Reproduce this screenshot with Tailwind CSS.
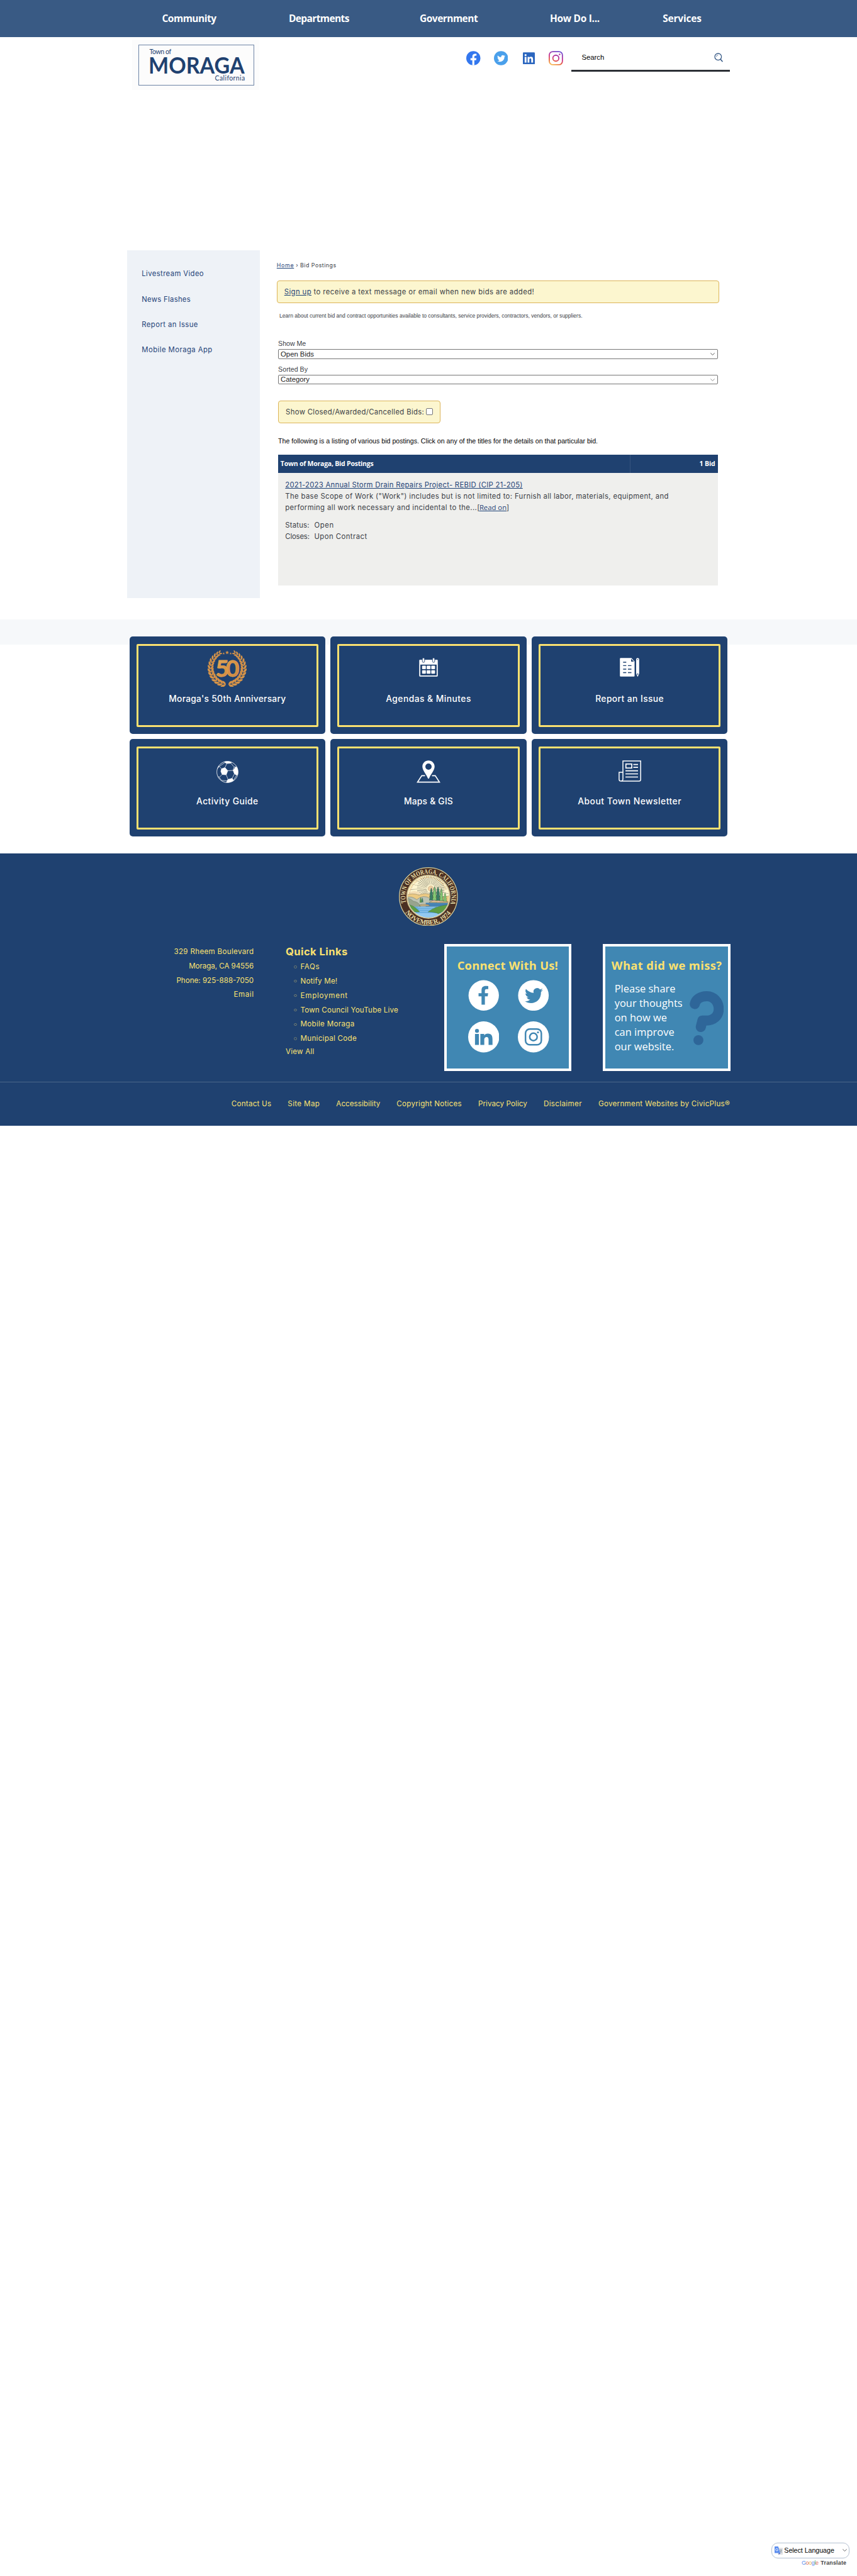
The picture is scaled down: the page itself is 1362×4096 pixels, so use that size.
<!DOCTYPE html>
<html lang="en">
<head>
<meta charset="utf-8">
<title>Bid Postings - Town of Moraga</title>
<script src="https://cdn.jsdelivr.net/npm/@tailwindcss/browser@4"></script>
</head>
<body class="flex h-[4096px] flex-col overflow-hidden bg-white font-['Inter',sans-serif] text-[11.3px] text-[#3b4046]">

<!-- Main navigation -->
<nav class="h-[58.5px] shrink-0 bg-[#395a84] pt-[19px] font-['Open_Sans',sans-serif] text-[15.5px] font-bold leading-5 text-white">
  <div class="flex whitespace-nowrap pl-[257.5px]">
    <a class="w-[201.4px] tracking-[-0.51px]">Community</a>
    <a class="w-[208.2px] tracking-[-0.6px]">Departments</a>
    <a class="w-[206.9px] tracking-[-0.53px]">Government</a>
    <a class="w-[179.2px] tracking-[-0.3px]">How Do I...</a>
    <a class="tracking-[-0.2px]">Services</a>
  </div>
</nav>

<!-- Header -->
<header class="mx-auto flex h-[339.4px] w-[958px] shrink-0 items-start justify-between pl-2 pt-[4.5px] font-['Liberation_Sans',sans-serif]">
  <a class="flex h-[80px] w-[202px] bg-[#fcfcfc] pl-[9.6px] pt-2">
    <span class="block h-[65px] w-[184.5px] border border-[#6d84a5] px-[17px] font-['Lato',sans-serif] text-[#1f4170]">
      <span class="block text-[10.5px] leading-5 tracking-[-0.44px]">Town of</span>
      <span class="-ml-[2px] block w-[168px] origin-left scale-x-92 text-[37px] font-bold leading-[21px]">MORAGA</span>
      <span class="block pl-[104px] text-[10.5px] leading-[23px] tracking-[0.39px]">California</span>
    </span>
  </a>
  <div class="flex items-start">
    <div class="flex items-center gap-[21.4px] pt-[18px]">
      <svg class="h-[23px] w-[22.5px]" viewBox="0 0 24 24"><circle cx="12" cy="12" r="12" fill="#3377ee"/><path fill="#fff" d="M10.3 24v-8.6H7.2V12h3.1V9.6c0-3.4 1.6-5 4.9-5 .7 0 1.7.1 2.2.2v2.9h-1.3c-1.8 0-2.4.7-2.4 2.4V12h3.6l-.6 3.4h-3V24z"/></svg>
      <svg class="h-[23px] w-[22.5px]" viewBox="0 0 24 24"><circle cx="12" cy="12" r="12" fill="#4aa0eb"/><path fill="#fff" d="M19.2 8.2c-.5.2-1 .4-1.600.5.6-.4 1-.9 1.200-1.600-.5.3-1.100.6-1.800.7A2.800 2.800 0 0 0 12.200 10.300C9.900 10.200 7.800 9.100 6.400 7.400c-.8 1.300-.4 3 .9 3.800-.5 0-.9-.1-1.300-.3 0 1.400 1 2.500 2.300 2.800-.4.1-.8.1-1.300 0 .4 1.200 1.400 2 2.600 2A5.700 5.700 0 0 1 5.500 16.800c4.700 2.900 12.400.7 12.300-7.200.6-.4 1-.9 1.400-1.400z"/></svg>
      <svg class="mx-[2px] h-[19.500px] w-[19px]" viewBox="0 0 20 20"><rect width="20" height="20" rx="1.300" fill="#2b66bf"/><g fill="#fff"><circle cx="4.500" cy="4.600" r="1.700"/><path d="M3 7.600h3V17H3zM7.900 7.600h2.800v1.300c.5-.9 1.500-1.500 2.900-1.500 2.700 0 3.400 1.700 3.400 4.300V17h-3v-4.700c0-1.300-.2-2.300-1.500-2.300s-1.700 1-1.700 2.200V17H7.900z"/></g></svg>
      <svg class="-ml-[1.500px] h-[23px] w-[22.800px]" viewBox="0 0 24 24" fill="none" stroke="url(#insta)"><defs><linearGradient id="insta" gradientUnits="userSpaceOnUse" x1="6" y1="24" x2="15" y2="0"><stop offset="0" stop-color="#f9c65a"/><stop offset=".28" stop-color="#e8603c"/><stop offset=".55" stop-color="#c8308f"/><stop offset="1" stop-color="#6b4bd0"/></linearGradient></defs><rect x="1" y="1" width="22" height="22" rx="6" stroke-width="1.900"/><circle cx="12" cy="12" r="5" stroke-width="1.900"/><circle cx="18.300" cy="5.700" r=".7" stroke="#b23aa4" stroke-width="1.300"/></svg>
    </div>
    <div class="ml-[13.500px] flex h-[51px] w-[252px] items-start justify-between border-b-[3px] border-[#2c3036] pl-[16.500px] pr-[11px] text-black">
      <span class="pt-[18px] text-[11.300px] leading-5">Search</span>
      <svg class="mt-[21px] h-[14.500px] w-[14px]" viewBox="0 0 14 14.500" fill="none" stroke="#3a5c88" stroke-linecap="round"><circle cx="6.300" cy="6.300" r="5.300" stroke-width="1.300"/><path d="M10.300 10.500 12.900 13.500" stroke-width="1.700"/><path d="M3.400 6A3.200 3.200 0 0 1 6 3.300" stroke-width=".8"/></svg>
    </div>
  </div>
</header>

<!-- Side navigation and bid listing -->
<div class="mx-auto flex h-[553.200px] w-[958px] shrink-0">
  <aside class="flex w-[210.600px] shrink-0 flex-col bg-[#eef2f7] pl-[23.300px] pt-[27px] leading-[20px] text-[#1f4377]">
    <a class="h-[40.300px] pt-[0.500px] tracking-[0.390px]">Livestream Video</a>
    <a class="h-[40.300px] pt-[0.500px] tracking-[0.290px]">News Flashes</a>
    <a class="h-[40.300px] pt-[0.500px] tracking-[0.430px]">Report an Issue</a>
    <a class="h-[40.300px] pt-[0.500px] tracking-[0.450px]">Mobile Moraga App</a>
  </aside>

  <main class="ml-[27.200px] w-[703.300px] shrink-0 whitespace-nowrap pt-[17px]">
    <p class="text-[8.800px] leading-[14px] tracking-[0.500px]"><a class="tracking-[0.700px] text-[#1f4377] underline">Home</a> › Bid Postings</p>
    <div class="mt-[17px] flex h-[36.200px] items-center rounded-[4px] border border-[#dcb458] bg-[#fcf6cf] px-[11px] tracking-[0.410px]"><p><a class="text-[#1f4377] underline">Sign up</a> to receive a text message or email when new bids are added!</p></div>

    <div class="pl-[2.300px] font-['Liberation_Sans',sans-serif]">
      <p class="mt-[14.200px] pl-[2px] text-[8.600px] leading-[12px] tracking-[-0.033px]">Learn about current bid and contract opportunities available to consultants, service providers, contractors, vendors, or suppliers.</p>
      <p class="mt-[31.900px] text-[10.600px] leading-[12px]">Show Me</p>
      <div class="mt-[3.300px] flex h-[15.600px] w-[698.500px] items-center justify-between rounded-[2px] border border-[#767676] bg-white pl-[3px] pr-[4px] text-[11.300px] leading-[13px] text-[#222]"><span>Open Bids</span>
        <svg class="h-[4px] w-[7px]" viewBox="0 0 7 4" fill="none" stroke="#333" stroke-width=".8"><path d="M.3.4 3.500 3.500 6.700.4"/></svg></div>
      <p class="mt-[9.900px] text-[10.600px] leading-[12px] tracking-[0.050px]">Sorted By</p>
      <div class="mt-[2.900px] flex h-[15.600px] w-[698.500px] items-center justify-between rounded-[2px] border border-[#767676] bg-white pl-[3px] pr-[4px] text-[11.300px] leading-[13px] text-[#222]"><span>Category</span>
        <svg class="h-[4px] w-[7px]" viewBox="0 0 7 4" fill="none" stroke="#777" stroke-width=".8"><path d="M.3.4 3.500 3.500 6.700.4"/></svg></div>
      <div class="mt-[25.900px] flex h-[35.900px] w-[257.700px] items-center gap-[3px] rounded-[4px] border border-[#dcb458] bg-[#fcf6cf] pl-[11px] font-['Inter',sans-serif] tracking-[0.350px]"><span>Show Closed/Awarded/Cancelled Bids:</span><i class="mb-[2px] block size-[10.500px] rounded-[2px] border border-[#767676] bg-white"></i></div>
      <p class="mt-[22px] text-[10.600px] leading-[12px] tracking-[0.013px] text-black">The following is a listing of various bid postings. Click on any of the titles for the details on that particular bid.</p>
    </div>

    <section class="ml-[2px] mt-[16.100px] w-[698.800px]">
      <header class="flex h-[28.700px] items-center bg-[#1f4170] font-['Open_Sans',sans-serif] text-[10.500px] font-bold text-white">
        <h2 class="flex-1 pl-[4px] tracking-[-0.220px]">Town of Moraga, Bid Postings</h2>
        <span class="flex h-full w-[139.700px] items-center justify-end border-l border-[#35547f] pr-[4px] tracking-[-0.130px]">1 Bid</span>
      </header>
      <div class="h-[178.800px] bg-[#efefed] pl-[11.500px] pt-[11.400px] leading-[17.300px]">
        <a class="block tracking-[0.278px] text-[#1f4377] underline">2021-2023 Annual Storm Drain Repairs Project- REBID (CIP 21-205)</a>
        <p class="tracking-[0.371px]">The base Scope of Work ("Work") includes but is not limited to: Furnish all labor, materials, equipment, and</p>
        <p class="tracking-[0.394px]">performing all work necessary and incidental to the...<span class="tracking-[-0.500px]">[</span><a class="font-['Open_Sans',sans-serif] font-medium tracking-normal text-[#1f4377] underline">Read on</a>]</p>
        <dl class="mt-[11.200px] grid grid-cols-[46.100px_auto]">
          <dt class="tracking-[0.220px]">Status:</dt><dd class="tracking-[0.700px]">Open</dd>
          <dt class="tracking-[-0.150px]">Closes:</dt><dd class="tracking-[0.470px]">Upon Contract</dd>
        </dl>
      </div>
    </section>
  </main>
</div>

<!-- Quick access cards -->
<section class="mt-[34.400px] shrink-0 bg-[linear-gradient(#f6f8fa_40px,#fff_40px)] pt-[27px]">
  <div class="mx-auto grid w-[951px] grid-cols-3 gap-[8px] text-center text-[13.800px] font-medium leading-[19px] text-white">
    <a class="block h-[154.800px] rounded-[5px] bg-[#1f4170] p-[11.300px]">
      <div class="h-full rounded-[2px] border-[3px] border-[#fbe170]">
        <div class="flex h-[75px] items-center justify-center pb-[2px]">
          <svg class="h-[58px] w-[62px]" viewBox="-31 -29 62 58">
            <defs>
              <linearGradient id="gold" gradientUnits="userSpaceOnUse" x1="-28" y1="-28" x2="22" y2="28"><stop offset="0" stop-color="#e9bd72"/><stop offset=".5" stop-color="#d79347"/><stop offset="1" stop-color="#c77f42"/></linearGradient>
              <g id="leaves"><path d="M0 3C-4.800 2-5.200-2-4.700-4.700-1.800-3.600 0-1.200 0 3zM0 3C0-.800 1.400-3.400 4.700-4.200 5.200-.800 3.800 2 0 3z"/></g>
              <g id="branch" fill="url(#gold)">
                <use href="#leaves" transform="translate(-5 25) rotate(-78)"/>
                <use href="#leaves" transform="translate(-10 23.300) rotate(-67)"/>
                <use href="#leaves" transform="translate(-14.500 20.800) rotate(-55)"/>
                <use href="#leaves" transform="translate(-18.500 17.500) rotate(-44)"/>
                <use href="#leaves" transform="translate(-21.800 13.200) rotate(-32)"/>
                <use href="#leaves" transform="translate(-24.300 8.500) rotate(-20)"/>
                <use href="#leaves" transform="translate(-25.800 3.500) rotate(-9)"/>
                <use href="#leaves" transform="translate(-26.200 -1.500) rotate(2) scale(.95)"/>
                <use href="#leaves" transform="translate(-25.500 -6.500) rotate(12) scale(.92)"/>
                <use href="#leaves" transform="translate(-24 -11.300) rotate(21) scale(.9)"/>
                <use href="#leaves" transform="translate(-21.500 -15.800) rotate(31) scale(.85)"/>
                <use href="#leaves" transform="translate(-18.500 -19.500) rotate(41) scale(.8)"/>
                <use href="#leaves" transform="translate(-15 -22.500) rotate(50) scale(.75)"/>
                <use href="#leaves" transform="translate(-11.500 -25) rotate(58) scale(.65)"/>
              </g>
              <path id="star" d="M0-3 .900-.900 3-.800 1.300.600 1.900 2.800 0 1.500-1.900 2.800-1.300.600-3-.800-.900-.900z"/>
            </defs>
            <use href="#branch"/><use href="#branch" transform="scale(-1 1)"/>
            <g fill="#d79347"><use href="#star" y="-25.500"/><use href="#star" transform="translate(-5.500 -24) scale(.6)"/><use href="#star" transform="translate(5.500 -24) scale(.6)"/></g>
            <text x="-2" y="13.200" text-anchor="middle" class="font-['Lato',sans-serif] text-[37px] font-bold tracking-[-5px]" fill="url(#gold)" stroke="#e0a04e" stroke-width=".8">50</text>
          </svg>
        </div>
        <p class="tracking-[0.260px]">Moraga's 50th Anniversary</p>
      </div>
    </a>
    <a class="block h-[154.800px] rounded-[5px] bg-[#1f4170] p-[11.300px]">
      <div class="h-full rounded-[2px] border-[3px] border-[#fbe170]">
        <div class="flex h-[75px] items-center justify-center pb-[6px]">
          <svg class="h-[30px] w-[30px]" viewBox="0 0 30 30" fill="#fff"><path d="M1.500 3h27q1.200 0 1.200 1.200v24.300q0 1.200-1.200 1.200h-27Q.300 29.700.300 28.500V4.200Q.300 3 1.500 3zM2 10.800V27.900h26V10.800z" fill-rule="evenodd"/><g stroke="#1f4170" stroke-width=".9"><rect x="5.200" y="0" width="3.600" height="7.200" rx="1.800"/><rect x="21.300" y="0" width="3.600" height="7.200" rx="1.800"/></g><rect x="4.800" y="12.500" width="6" height="5.600" rx="1"/><rect x="12.100" y="12.500" width="6" height="5.600" rx="1"/><rect x="19.400" y="12.500" width="6" height="5.600" rx="1"/><rect x="4.800" y="19.700" width="6" height="5.600" rx="1"/><rect x="12.100" y="19.700" width="6" height="5.600" rx="1"/><rect x="19.400" y="19.700" width="6" height="5.600" rx="1"/></svg>
        </div>
        <p class="tracking-[0.480px]">Agendas &amp; Minutes</p>
      </div>
    </a>
    <a class="block h-[154.800px] rounded-[5px] bg-[#1f4170] p-[11.300px]">
      <div class="h-full rounded-[2px] border-[3px] border-[#fbe170]">
        <div class="flex h-[75px] items-center justify-center pb-[6px]">
          <svg class="h-[30px] w-[31px]" viewBox="0 0 31 30"><path fill="#fff" d="M1.500.200h17l5 5.500v23q0 1.100-1.200 1.100H1.500Q.200 29.800.200 28.500v-27Q.200.200 1.500.200z"/><path fill="#1f4170" d="M18 1.500V6h4.500z"/><path stroke="#1f4170" stroke-width="1.300" d="M5.300 7h5M5.300 12.400h5M13 12.400h5.500M5.300 18h5M13 18h5.500M5.300 23.500h5M13 23.500h5.500"/><path fill="#fff" d="M26 2.800q0-2.600 2.400-2.600t2.400 2.600V25l-2.200 5h-.4L26 25z"/><circle cx="28.400" cy="2.700" r=".8" fill="#1f4170"/><path d="M28.400 24.800v2" stroke="#1f4170" stroke-width="1.600"/></svg>
        </div>
        <p class="tracking-[0.430px]">Report an Issue</p>
      </div>
    </a>
    <a class="block h-[154.800px] rounded-[5px] bg-[#1f4170] p-[11.300px]">
      <div class="h-full rounded-[2px] border-[3px] border-[#fbe170]">
        <div class="flex h-[75px] items-center justify-center">
          <svg class="h-[35px] w-[35px]" viewBox="0 0 35 35"><defs><clipPath id="ballclip"><circle cx="17.500" cy="17.500" r="16.900"/></clipPath></defs><circle cx="17.500" cy="17.500" r="16.900" fill="none" stroke="#fff" stroke-width=".8"/><g clip-path="url(#ballclip)" fill="#fff" stroke="#fff" stroke-width=".7"><path d="M8 12.500 13.500 10.500 18 15.500 15.500 22 9 21.500 7 16.500z"/><path d="M10-1 13.500 2.500 16.500 4 23 3.600 25 0z"/><path d="M30.500 9.500 26.500 15 28.500 20.500 32 22.500 36 20V11z"/><path d="M18 29.500 25 27.500 27 31 22 36H15z"/><path d="M1 5.500 4.500 8.500 1.500 12H-1zM2 25 5 30 3 33H0z"/><path fill="none" d="M16.500 4 13.500 10.500M23 3.600 28 9.500 30.500 9.500M28 9.500 26.500 15 18 15.500M4.500 8.500 8 12.500M4.500 8.500 13.500 2.500M15.500 22 18.500 29.500M9 21.500 4.500 26M28.500 20.500 25 27.500M27 31 32 22.500M2.500 24 4.500 26 8 31 18 31.500"/></g></svg>
        </div>
        <p class="tracking-[0.430px]">Activity Guide</p>
      </div>
    </a>
    <a class="block h-[154.800px] rounded-[5px] bg-[#1f4170] p-[11.300px]">
      <div class="h-full rounded-[2px] border-[3px] border-[#fbe170]">
        <div class="flex h-[75px] items-center justify-center">
          <svg class="h-[36px] w-[38px]" viewBox="0 0 38 36"><path fill="#fff" fill-rule="evenodd" d="M19 .200c5.400 0 9.700 4.200 9.700 9.500C28.700 16 23 21 20 28.500c-.4 1-1.600 1-2 0C15 21 9.300 16 9.300 9.700 9.300 4.400 13.600.200 19 .200zM19 5a5 5 0 1 0 0 10 5 5 0 0 0 0-10z"/><path fill="none" stroke="#fff" stroke-width="1.700" d="M13.500 24.400H8.300L1.600 34.600h34.800L29.700 24.400h-5.200"/></svg>
        </div>
        <p class="tracking-[0.230px]">Maps &amp; GIS</p>
      </div>
    </a>
    <a class="block h-[154.800px] rounded-[5px] bg-[#1f4170] p-[11.300px]">
      <div class="h-full rounded-[2px] border-[3px] border-[#fbe170]">
        <div class="flex h-[75px] items-center justify-center pb-[3px]">
          <svg class="h-[34px] w-[36px]" viewBox="0 0 36 34" fill="none" stroke="#fff" stroke-width="1.500"><path d="M7 .900h28.200v29.600q0 2.500-2.500 2.500H3.900Q7 33 7 29.500z"/><path d="M7 19H.900v11.200Q.900 33 3.900 33"/><rect x="11.700" y="5.800" width="9.300" height="6.400" stroke-width="1.700"/><path stroke-width="1.700" d="M23.500 6.700h7.500M23.500 11.200h7.500M11 16.600h20M11 21.500h20M11 26.500h20"/></svg>
        </div>
        <p class="tracking-[0.520px]">About Town Newsletter</p>
      </div>
    </a>
  </div>
</section>

<!-- Footer -->
<footer class="mt-[27px] h-[432.500px] shrink-0 whitespace-nowrap bg-[#1f4170] pt-[21.700px] text-[11.600px] text-[#fbe170]">
  <svg class="mx-auto block size-[93.700px]" viewBox="0 0 528 528">
    <defs>
      <path id="arcTop" d="M64.400 320A207 207 0 1 1 463.600 320"/>
      <path id="arcBottom" d="M57 405A250 250 0 0 0 471 405"/>
      <path id="arcMotto" d="M100 235A166 166 0 0 1 428 235"/>
      <clipPath id="scene"><circle cx="264" cy="264" r="185"/></clipPath>
      <path id="pine" d="M0-60 10-35 6-35 16-8 10-8 20 22 12 22 22 50H-22L-12 22-20 22-10-8-16-8-6-35-10-35z"/>
    </defs>
    <circle cx="264" cy="264" r="260" fill="#4a3023" stroke="#d9cf9a" stroke-width="7"/>
    <circle cx="264" cy="264" r="193" fill="#fdf5d0" stroke="#c9b98a" stroke-width="9"/>
    <g clip-path="url(#scene)">
      <circle cx="285" cy="191" r="80" fill="none" stroke="#5b5a50" stroke-width="86" pathLength="360" stroke-dasharray="1.700 6.300"/>
      <circle cx="285" cy="191" r="150" fill="none" stroke="#5b5a50" stroke-width="60" pathLength="360" stroke-dasharray=".7 15.300"/>
      <circle cx="285" cy="191" r="24" fill="#f0cfa4" stroke="#b99a6b" stroke-width="3"/>
      <path fill="#f3ddb4" d="M70 245q40-35 80-30 35 5 60 30z"/>
      <path fill="#ecca83" stroke="#8c7a55" stroke-width="3" d="M60 255q60-30 120-5 60-30 120 5 80 30 180-10v90H60z"/>
      <path fill="#bcc3b4" stroke="#70786c" stroke-width="3" d="M70 270q40-15 90 20 60-50 120-10l60 40v40H70z"/>
      <path fill="#98a48e" stroke="#70786c" stroke-width="3" d="M60 280q30-10 70 25 50 5 65 50v20H60z"/>
      <path fill="#6aaee0" d="M70 352h400v120H70z"/>
      <path fill="#4583b5" d="M240 318h230v34H240z"/>
      <path stroke="#fff" stroke-width="3" d="M170 360h150M180 378h130M180 396h120M150 413h160" opacity=".6"/>
      <path fill="#93c9f0" d="M120 412h290v70H120z"/>
      <path fill="#d9be8c" stroke="#6d5c3e" stroke-width="3" d="M180 345q10-15 50-12 40-2 45 13zM270 315q60-35 100-20 60 5 80 20z"/>
      <path fill="#edb3c4" d="M285 300q20-25 35-12 10 10-5 16zM345 312q10-14 30-4z"/>
      <path fill="#5d9d45" stroke="#2d5b2c" stroke-width="3" stroke-dasharray="7 4" d="M90 335q50 10 95 65h-70zM262 400q60-50 180-65v40l-90 42q-20-15-90-17z"/>
      <g stroke="#25503f" stroke-width="3"><use href="#pine" transform="translate(290 245) scale(.8 1)" fill="#3c7d66"/><use href="#pine" transform="translate(350 242) scale(.85 1.100)" fill="#3c7d66"/><use href="#pine" transform="translate(319 240) scale(.95 1.100)" fill="#86c873"/><use href="#pine" transform="translate(380 250) scale(.75 1)" fill="#86c873"/><use href="#pine" transform="translate(413 270) scale(.7)" fill="#86c873"/><use href="#pine" transform="translate(195 295) scale(.4)" fill="#5d9d45"/><use href="#pine" transform="translate(210 295) scale(.35)" fill="#3c7d66"/></g>
    </g>
    <g fill="#e6dda8" class="font-['Liberation_Serif',serif] font-bold">
      <text class="text-[62px]" textLength="770" lengthAdjust="spacingAndGlyphs"><textPath href="#arcTop" textLength="770" lengthAdjust="spacingAndGlyphs">TOWN OF MORAGA, CALIFORNIA</textPath></text>
      <text class="text-[62px]" textLength="480" lengthAdjust="spacingAndGlyphs"><textPath href="#arcBottom" textLength="480" lengthAdjust="spacingAndGlyphs">NOVEMBER, 1974</textPath></text>
      <text class="text-[18px]" fill="#dcae6a"><textPath href="#arcMotto">RANCHO LAGUNA de los PALOS COLORADOS 1835</textPath></text>
    </g>
  </svg>

  <div class="mx-auto mt-[28.400px] flex h-[219.500px] w-[958px]">
    <address class="flex w-[201.200px] shrink-0 flex-col items-end pt-[1px] not-italic leading-[22.850px]">
      <span class="-mr-[0.300px] tracking-[0.320px]">329 Rheem Boulevard</span><span class="tracking-[-0.060px]">Moraga, CA 94556</span><span>Phone: 925-888-7050</span><span class="-mr-[0.500px] tracking-[0.600px]">Email</span>
    </address>
    <div class="ml-[50.800px] w-[252.200px] shrink-0 pt-[0.300px]">
      <h3 class="h-[24.800px] text-[16.500px] font-bold leading-6 tracking-[0.460px]">Quick Links</h3>
      <ul class="pl-[13.500px] leading-[22.880px]">
        <li class="flex items-center gap-[5.500px]"><i class="size-[4.500px] rounded-full border border-[#6f7a70]"></i><a class="tracking-[0.570px]">FAQs</a></li>
        <li class="flex items-center gap-[5.500px]"><i class="size-[4.500px] rounded-full border border-[#6f7a70]"></i><a class="tracking-[0.200px]">Notify Me!</a></li>
        <li class="flex items-center gap-[5.500px]"><i class="size-[4.500px] rounded-full border border-[#6f7a70]"></i><a class="tracking-[0.760px]">Employment</a></li>
        <li class="flex items-center gap-[5.500px]"><i class="size-[4.500px] rounded-full border border-[#6f7a70]"></i><a class="tracking-[0.190px]">Town Council YouTube Live</a></li>
        <li class="flex items-center gap-[5.500px]"><i class="size-[4.500px] rounded-full border border-[#6f7a70]"></i><a class="tracking-[0.300px]">Mobile Moraga</a></li>
        <li class="flex items-center gap-[5.500px]"><i class="size-[4.500px] rounded-full border border-[#6f7a70]"></i><a class="tracking-[0.290px]">Municipal Code</a></li>
      </ul>
      <a class="block leading-[18px] tracking-[0.220px]">View All</a>
    </div>

    <section class="h-[202.200px] w-[202.200px] shrink-0 border-4 border-white bg-[#4087b3] pt-[18.500px] font-['Open_Sans',sans-serif]">
      <h3 class="pl-[16.500px] text-[18.300px] font-bold leading-6 tracking-[0.280px]">Connect With Us!</h3>
      <div class="mt-[10.500px] grid w-fit grid-cols-2 gap-x-[30px] gap-y-[17px] pl-[33.500px]">
        <svg class="size-[49.500px]" viewBox="0 0 50 50"><circle cx="25" cy="25" r="24.400" fill="#fff"/><path fill="#4087b3" d="M21.500 40V26.400h-4.800v-5h4.800v-4.700c0-4.900 2.600-6.900 6.800-6.900 1.500 0 2.900.1 4 .300v4.900h-2.500c-2.400 0-2.900 1.100-2.900 2.800v3.600h5.200l-.7 5h-4.500V40z"/></svg>
        <svg class="size-[49.500px]" viewBox="0 0 50 50"><circle cx="25" cy="25" r="24.600" fill="#fff"/><path fill="#4087b3" d="M40.200 16.300c-1.100.5-2.200.8-3.400.9 1.300-.8 2.200-1.900 2.600-3.300-1.200.7-2.400 1.200-3.800 1.500a5.900 5.900 0 0 0-10.200 5.500c-5-.3-9.400-2.700-12.300-6.300-1.600 2.800-.8 6.200 1.800 7.900-1 0-1.900-.3-2.700-.7 0 2.800 2 5.300 4.800 5.900-.9.200-1.800.300-2.700.100.7 2.400 2.900 4.100 5.600 4.100a12 12 0 0 1-8.800 2.500c10.600 6.800 26.500 2.200 26.100-15.100 1.200-.9 2.200-1.900 3-3z"/></svg>
        <svg class="size-[49.500px]" viewBox="0 0 50 50"><circle cx="25" cy="25" r="25" fill="#fff"/><g fill="#4087b3"><circle cx="14.200" cy="15.200" r="3.200"/><path d="M11 20.300h6.300V38H11zM19.600 20.300h6.200v2.500c1-1.800 3-3 5.800-3 6.300 0 7.500 4.100 7.500 9.500V38h-6.300v-7.700c0-2.200-.100-5-3.100-5-3.200 0-3.800 2.400-3.800 4.800V38h-6.300z"/></g></svg>
        <svg class="size-[49.500px]" viewBox="0 0 50 50"><circle cx="25" cy="25" r="25" fill="#fff"/><g fill="none" stroke="#4087b3" stroke-width="2.500"><rect x="12.300" y="12.300" width="25.400" height="25.400" rx="7"/><circle cx="25" cy="25" r="6"/></g><circle cx="32.300" cy="17.700" r="1.600" fill="#4087b3"/></svg>
      </div>
    </section>

    <section class="ml-[50px] h-[202.200px] w-[202.200px] shrink-0 border-4 border-white bg-[#4087b3] pt-[18.500px] font-['Open_Sans',sans-serif]">
      <h3 class="pl-[9.500px] text-[18.300px] font-bold leading-6 tracking-[0.410px]">What did we miss?</h3>
      <div class="flex pl-[14.300px]">
        <p class="mt-[13.500px] w-[119px] text-[16.400px] leading-[22.950px] tracking-[0.040px] text-white">Please share<br>your thoughts<br>on how we<br>can improve<br>our website.</p>
        <svg class="mt-[29px] h-[86px] w-[54.500px]" viewBox="0 0 54 86"><path d="M8 20.500C9.500 13 17 8 27 8 38 8 46 17 46 28.500S37 46.800 26 46.800L20 46.800 17.500 57" fill="none" stroke="#2e6699" stroke-width="16" stroke-linecap="round" stroke-linejoin="round"/><circle cx="13.700" cy="77.900" r="7.900" fill="#2e6699"/></svg>
      </div>
    </section>
  </div>

  <div class="border-t border-[#4b6789]">
    <div class="mx-auto flex h-[68.500px] w-[958px] items-center justify-end gap-[26px]">
      <a class="tracking-[0.240px]">Contact Us</a><a class="tracking-[0.370px]">Site Map</a><a class="tracking-[0.070px]">Accessibility</a><a class="tracking-[0.270px]">Copyright Notices</a><a class="tracking-[0.090px]">Privacy Policy</a><a class="tracking-[0.370px]">Disclaimer</a><a class="tracking-[0.310px]">Government Websites by CivicPlus®</a>
    </div>
  </div>
</footer>

<!-- Translate widget -->
<div class="mb-[14px] mr-[12px] mt-auto flex shrink-0 flex-col items-end font-['Liberation_Sans',sans-serif]">
  <div class="flex h-[24.500px] w-[124.200px] items-center rounded-[10px] border border-[#b3c0d0] bg-white pl-[4.500px] pr-[3px] text-black">
    <svg class="mr-[2px] h-[13px] w-[13px]" viewBox="0 0 24 24"><rect x="10" y="4" width="14" height="20" rx="1" fill="#dfe0e2"/><path d="M12 24 18 19.500H12z" fill="#3a52b4"/><path d="M1 0h9.500L17 19.500H1q-1 0-1-1V1Q0 0 1 0z" fill="#5b8def"/><path d="M9.800 7.500A3.600 3.600 0 1 0 10.300 10H7" fill="none" stroke="#fff" stroke-width="1.600"/><path d="M15 10.500h7M18.500 9v1.500M20.500 10.500Q19 16 17 17.500M16.500 12.500Q19 16.500 22 18" fill="none" stroke="#6f8694" stroke-width="1.200"/></svg>
    <span class="flex-1 text-[10.700px] tracking-[-0.050px]">Select Language</span>
    <svg class="h-[4px] w-[7px]" viewBox="0 0 7 4" fill="none" stroke="#222" stroke-width=".7"><path d="M.3.4 3.500 3.500 6.700.4"/></svg>
  </div>
  <p class="flex h-[14.500px] w-[76px] items-center gap-[3.800px] pt-[1px] text-[9px] leading-3">
    <span class="w-[26.500px] tracking-[-0.420px]"><span class="text-[#5b8def]">G</span><span class="text-[#dd6c60]">o</span><span class="text-[#e6b93c]">o</span><span class="text-[#5b8def]">g</span><span class="text-[#5ab06c]">l</span><span class="text-[#dd6c60]">e</span></span><b class="text-[8.800px] tracking-[0.260px] text-[#444]">Translate</b>
  </p>
</div>
</body>
</html>
